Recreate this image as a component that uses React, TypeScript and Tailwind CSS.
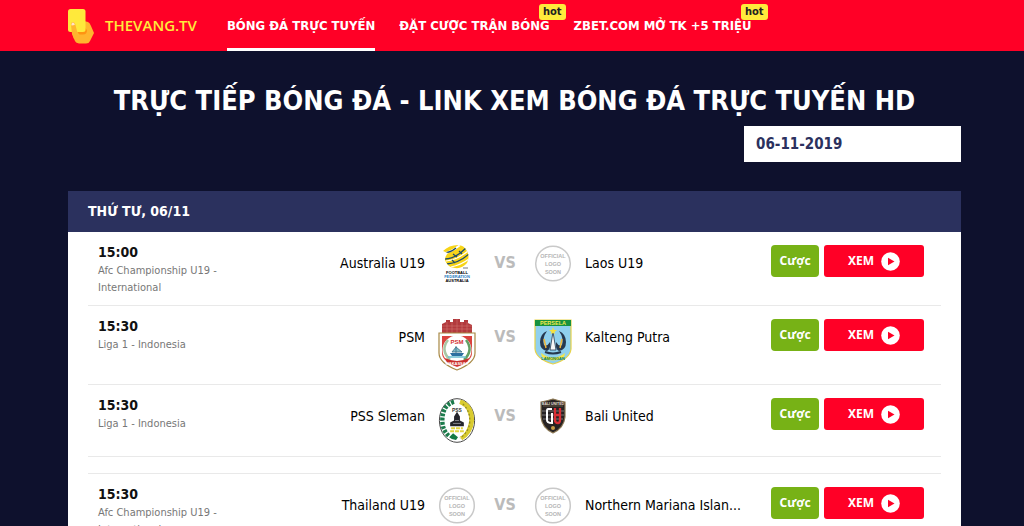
import React from 'react';
import clsx from 'clsx';

interface Match {
  id: number;
  time: string;
  league: string;
  home: string;
  away: string;
  homeLogo: React.ReactNode;
  awayLogo: React.ReactNode;
}

interface NavItem {
  label: string;
  active?: boolean;
  hot?: boolean;
}

const BrandMark: React.FC = () => (
  <svg width="27" height="36" viewBox="0 0 27 36" aria-hidden="true">
    <path d="M5 20 L17 13 L21 14 Q23 15 24 18 L27 25 L23 33 Q22 35.500 19 35.500 H12 Q8.500 35 7.500 32 L5 25 Z" fill="#ffb52e" />
    <path d="M10 23 H18 V20 L20 22 Q20 26.500 16 26.500 H12 Z" fill="#ff9412" />
    <rect x="1" y="1" width="17.500" height="23" rx="2.500" fill="#ffe93b" />
    <path d="M4 17 Q4 14 6 14 Q8 14.300 8.500 17 L10 23 Q10.500 26 13 27 L12 31 L7 31 L5 26 Z" fill="#ffb52e" />
    <path d="M4.400 16.500 Q4.600 14.500 6 14.600 Q7.600 14.800 7.800 17 L4.600 17.600 Z" fill="#ffe3c9" />
  </svg>
);

const PendingLogo: React.FC = () => (
  <svg width="38" height="38" viewBox="0 0 38 38" aria-hidden="true">
    <circle cx="19" cy="18.500" r="17.300" fill="#fff" stroke="#c9c9c9" strokeWidth="1.500" />
    <g fill="#b5b5b5" fontFamily="Liberation Sans, sans-serif" fontWeight="700" textAnchor="middle">
      <text x="19" y="13" fontSize="5.500">OFFICIAL</text>
      <text x="19" y="21" fontSize="5.500">LOGO</text>
      <text x="19" y="29" fontSize="5.500">SOON</text>
    </g>
  </svg>
);

const AustraliaLogo: React.FC = () => (
  <svg width="30" height="38" viewBox="0 0 30 38" aria-hidden="true">
    <clipPath id="aus-ball">
      <path d="M1 6 Q7 0 16 0 Q22 0 25 6 Q28 12 25 18 Q20 24 13 23 Q5 22 3 15 Q3 11 6 8 Z" />
    </clipPath>
    <g clipPath="url(#aus-ball)">
      <rect width="30" height="25" fill="#f7d417" />
      <path d="M0 9 Q10 7 18 0" stroke="#fff" strokeWidth="2" fill="none" />
      <path d="M1 8 Q8 8 14 3" stroke="#1c4b6c" strokeWidth="1.500" fill="none" />
      <path d="M3 14 Q13 14 24 3" stroke="#1c4b6c" strokeWidth="1.300" fill="none" />
      <path d="M4 16 Q15 15 26 6" stroke="#fff" strokeWidth="1.200" fill="none" />
      <path d="M5 19 Q17 18 27 9" stroke="#1c4b6c" strokeWidth="1.300" fill="none" />
      <path d="M9 22 Q19 20 27 14" stroke="#fff" strokeWidth="1.200" fill="none" />
      <path d="M11 9 L15 12 M17 6 L20 9 M10 15 L13 18" stroke="#1c4b6c" strokeWidth="1.200" />
    </g>
    <path d="M21 23 H26" stroke="#555" strokeWidth="0.800" />
    <g fontFamily="Liberation Sans, sans-serif" fontWeight="700" textAnchor="middle">
      <text x="15" y="28.500" fontSize="4">FOOTBALL</text>
      <text x="15" y="32.500" fontSize="4" fill="#2b80c0">FEDERATION</text>
      <text x="15" y="36.500" fontSize="4">AUSTRALIA</text>
    </g>
  </svg>
);

const PsmLogo: React.FC = () => (
  <svg width="38" height="52" viewBox="0 0 38 52" aria-hidden="true">
    <path d="M4 14 V5 L8 3 V1 H12 V3 H15 V0 H22 V3 H26 V1 H30 V4 L34 6 V14 Z" fill="#b23a3d" />
    <path d="M4 7 H34 M4 10 H34 M9 3 V14 M14 3 V14 M19 0 V14 M24 3 V14 M29 3 V14" stroke="#d77a76" strokeWidth="0.500" />
    <path d="M1 14 H37 V34 Q37 44 19 51 Q1 44 1 34 Z" fill="#fff" stroke="#a88945" strokeWidth="1.200" />
    <path d="M4 17 H34 V34 Q34 42 19 48 Q4 42 4 34 Z" fill="#d9433e" />
    <circle cx="19" cy="31" r="14.500" fill="#fff" />
    <path d="M10 21 Q2 31 12 41" stroke="#a9c7a5" strokeWidth="2.500" fill="none" />
    <path d="M28 21 Q36 31 26 41" stroke="#63a064" strokeWidth="2.500" fill="none" />
    <text x="19" y="25" fontSize="6" fontWeight="700" fill="#d32f2f" textAnchor="middle" fontFamily="Liberation Sans, sans-serif">PSM</text>
    <path d="M12 34 H26 L24 37 H14 Z" fill="#2c6fa0" />
    <path d="M18 27 V34 M14 33 L18 28 L24 33 Z" fill="#82bdc8" stroke="#3b6f85" strokeWidth="0.800" />
    <path d="M10 38 H28" stroke="#67bcd0" strokeWidth="1.500" />
    <path d="M7 39 Q19 45 31 39 L29 43.500 Q19 50 9 43.500 Z" fill="#c9302c" />
    <text x="19" y="46" fontSize="4" fontWeight="700" fill="#fff" textAnchor="middle" fontFamily="Liberation Sans, sans-serif">MAKASSAR</text>
  </svg>
);

const PerselaLogo: React.FC = () => (
  <svg width="38" height="46" viewBox="0 0 38 46" aria-hidden="true">
    <path d="M1 1 H37 V30 Q36 40 19 45 Q2 40 1 30 Z" fill="#8fd0ee" stroke="#e7d34a" strokeWidth="1.200" />
    <rect x="1" y="1" width="36" height="6" fill="#17913f" />
    <text x="19" y="6" fontSize="5.500" fontWeight="700" fill="#f4e94c" textAnchor="middle" fontFamily="Liberation Sans, sans-serif">PERSELA</text>
    <path d="M13 12 Q6 15 6 23 Q6 31 13 32 Q17 30 16 23 Q13 28 10 26 Q8 19 13 12 Z" fill="#26384e" />
    <path d="M25 12 Q32 15 32 23 Q32 31 25 32 Q21 30 22 23 Q25 28 28 26 Q30 19 25 12 Z" fill="#26384e" />
    <path d="M10 20 L12 29 M28 20 L26 29" stroke="#f0b63a" strokeWidth="1.500" />
    <path d="M19 13 L22 31 H16 Z" fill="#f6f6f6" stroke="#26384e" strokeWidth="0.800" />
    <path d="M19 8 L20 11 L23 11 L20.500 13 L21 15 L19 14 L17 15 L17.500 13 L15 11 L18 11 Z" fill="#f7e13d" />
    <path d="M11 33 Q19 36 27 33" stroke="#26384e" strokeWidth="2" fill="none" />
    <path d="M7 34 Q19 43 31 34 L30 38 Q19 45 8 38 Z" fill="#f2e64b" />
    <text x="19" y="41" fontSize="4" fontWeight="700" fill="#168045" textAnchor="middle" fontFamily="Liberation Sans, sans-serif">LAMONGAN</text>
  </svg>
);

const SlemanLogo: React.FC = () => (
  <svg width="38" height="45" viewBox="0 0 38 46" aria-hidden="true">
    <ellipse cx="19" cy="23" rx="18" ry="22.300" fill="#fff" stroke="#444" strokeWidth="1" />
    <path d="M16 4 Q4 7 4 23 Q4 33 11 39" stroke="#1c7b4c" strokeWidth="4.500" strokeDasharray="3 1.300" fill="none" />
    <path d="M22 4 Q34 8 34 23 Q33 35 23 41" stroke="#d9cb2f" strokeWidth="5" fill="none" />
    <path d="M25 6 Q33 14 32 25 Q31 35 22 41" stroke="#8f8a24" strokeWidth="1.300" strokeDasharray="2 2" fill="none" />
    <ellipse cx="19" cy="23" rx="11.500" ry="17" fill="#fff" />
    <text x="19" y="14" fontSize="5" fontWeight="700" fill="#333" textAnchor="middle" fontFamily="Liberation Sans, sans-serif">PSS</text>
    <path d="M19 14 L22 19 V23 L26 25 V29 H12 V25 L16 23 V19 Z" fill="#24242b" />
    <path d="M17 23 H21 M15 26 H23" stroke="#9a9aa2" strokeWidth="0.800" />
    <path d="M13 31 H25 M12 34 H26" stroke="#e3d53e" strokeWidth="2" strokeDasharray="4 1" />
    <path d="M11 40 L15 36 L20 40 L18 43 Q13 42 11 40 Z" fill="#157a45" />
  </svg>
);

const BaliLogo: React.FC = () => (
  <svg width="26" height="36" viewBox="0 0 26 36" aria-hidden="true">
    <path d="M1 4 Q7 3 13 1 Q19 3 25 4 V19 Q24 30 13 35 Q2 30 1 19 Z" fill="#272323" stroke="#8b7753" strokeWidth="1.200" />
    <path d="M3 8 H23" stroke="#77664a" strokeWidth="0.800" />
    <text x="13" y="7" fontSize="3.500" fontWeight="700" fill="#e6dfd2" textAnchor="middle" fontFamily="Liberation Sans, sans-serif">BALI UNITED</text>
    <path d="M2 13 H24 M2 17 H24 M3 21 H23" stroke="#5f5b5b" strokeWidth="1.500" />
    <path d="M12 11 H8 Q7 11 7 13 V22 Q7 25 12 25 V15" stroke="#fff" strokeWidth="2" fill="none" />
    <path d="M15 10 V22 Q15 25 18 25 Q20 25 20 22 V10 M15 17 H20" stroke="#d92f35" strokeWidth="2.300" fill="none" />
    <circle cx="13" cy="30" r="2" fill="#c79b45" />
  </svg>
);

const navItems: NavItem[] = [
  { label: 'BÓNG ĐÁ TRỰC TUYẾN', active: true },
  { label: 'ĐẶT CƯỢC TRẬN BÓNG', hot: true },
  { label: 'ZBET.COM MỞ TK +5 TRIỆU', hot: true },
];

const matchGroups: Match[][] = [
  [
    {
      id: 1,
      time: '15:00',
      league: 'Afc Championship U19 - International',
      home: 'Australia U19',
      away: 'Laos U19',
      homeLogo: <AustraliaLogo />,
      awayLogo: <PendingLogo />,
    },
    {
      id: 2,
      time: '15:30',
      league: 'Liga 1 - Indonesia',
      home: 'PSM',
      away: 'Kalteng Putra',
      homeLogo: <PsmLogo />,
      awayLogo: <PerselaLogo />,
    },
    {
      id: 3,
      time: '15:30',
      league: 'Liga 1 - Indonesia',
      home: 'PSS Sleman',
      away: 'Bali United',
      homeLogo: <SlemanLogo />,
      awayLogo: <BaliLogo />,
    },
  ],
  [
    {
      id: 4,
      time: '15:30',
      league: 'Afc Championship U19 - International',
      home: 'Thailand U19',
      away: 'Northern Mariana Islan...',
      homeLogo: <PendingLogo />,
      awayLogo: <PendingLogo />,
    },
  ],
];

const Header: React.FC = () => (
  <header className="flex h-[51px] items-stretch bg-[#ff0026] pr-[63px] pl-[67px]">
    <a href="#" className="mr-[30px] flex items-center gap-[11px] font-['Open_Sans',sans-serif] text-[15px] font-semibold text-[#ffeb3b]">
      <BrandMark />
      THEVANG.TV
    </a>
    <nav className="flex gap-6 text-[13px] font-bold text-white">
      {navItems.map((item) => (
        <a
          key={item.label}
          href="#"
          className={clsx(
            'relative flex items-center border-y-[3px] border-transparent whitespace-nowrap',
            item.active && 'border-b-white'
          )}
        >
          {item.label}
          {item.hot && (
            <span className="absolute top-px -right-4 rounded-[3px] bg-[#ffeb3b] px-1 text-[11px] leading-4 text-[#222]">
              hot
            </span>
          )}
        </a>
      ))}
    </nav>
  </header>
);

const MatchRow: React.FC<{ match: Match }> = ({ match }) => (
  <li className="flex items-start border-b border-[#e9e9e9] pt-[13px] pr-[17px] pb-[9px] pl-[10px]">
    <div className="w-[150px] shrink-0">
      <p className="text-sm leading-[14px] font-bold text-[#111]">{match.time}</p>
      <p className="mt-[3px] text-[11px] leading-[17px] text-[#777]">{match.league}</p>
    </div>
    <p className="min-w-0 flex-1 truncate text-right text-sm leading-9 text-black">{match.home}</p>
    <div className="mb-1 flex w-16 shrink-0 justify-center">{match.homeLogo}</div>
    <span className="w-8 shrink-0 text-center text-base leading-9 font-bold text-[#bbb]">VS</span>
    <div className="mb-1 flex w-16 shrink-0 justify-center">{match.awayLogo}</div>
    <p className="w-40 shrink-0 truncate text-sm leading-9 text-black">{match.away}</p>
    <div className="ml-[26px] flex shrink-0 gap-[5px] font-['Noto_Sans',sans-serif] text-xs font-bold text-white">
      <button type="button" className="h-8 w-12 rounded bg-[#77b216]">
        Cược
      </button>
      <button type="button" className="flex h-8 w-[100px] items-center justify-center gap-[7px] rounded-[3px] bg-[#ff0026]">
        XEM
        <svg width="19" height="19" viewBox="0 0 19 19" aria-hidden="true">
          <circle cx="9.500" cy="9.500" r="9.300" fill="#fff" />
          <path d="M7 5.700 L13.500 9.500 L7 13.300 Z" fill="#ff0026" />
        </svg>
      </button>
    </div>
  </li>
);

const App: React.FC = () => {
  const [date, setDate] = React.useState('06-11-2019');

  return (
    <div className="min-h-screen bg-[#0e112d] font-['DejaVu_Sans_Condensed','Noto_Sans',sans-serif]">
      <Header />
      <main className="pr-[63px] pl-[68px]">
        <h1 className="pt-[30px] pb-[5px] text-center text-[27px] leading-10 font-bold whitespace-nowrap text-white">
          TRỰC TIẾP BÓNG ĐÁ - LINK XEM BÓNG ĐÁ TRỰC TUYẾN HD
        </h1>
        <div className="flex justify-end">
          <input
            type="text"
            aria-label="Ngày"
            value={date}
            onChange={(e) => setDate(e.target.value)}
            className="h-9 w-[217px] bg-white px-3 text-[15px] font-bold text-[#2b315e]"
          />
        </div>

        <section className="mt-[29px] bg-white">
          <h2 className="bg-[#2b315e] px-5 text-sm leading-[41px] font-bold text-white">
            THỨ TƯ, 06/11
          </h2>
          {matchGroups.map((group, i) => (
            <ul key={i} className={clsx('mx-5', i > 0 && 'mt-4 border-t border-[#e9e9e9]')}>
              {group.map((match) => (
                <MatchRow key={match.id} match={match} />
              ))}
            </ul>
          ))}
        </section>
      </main>
    </div>
  );
};

export default App;
